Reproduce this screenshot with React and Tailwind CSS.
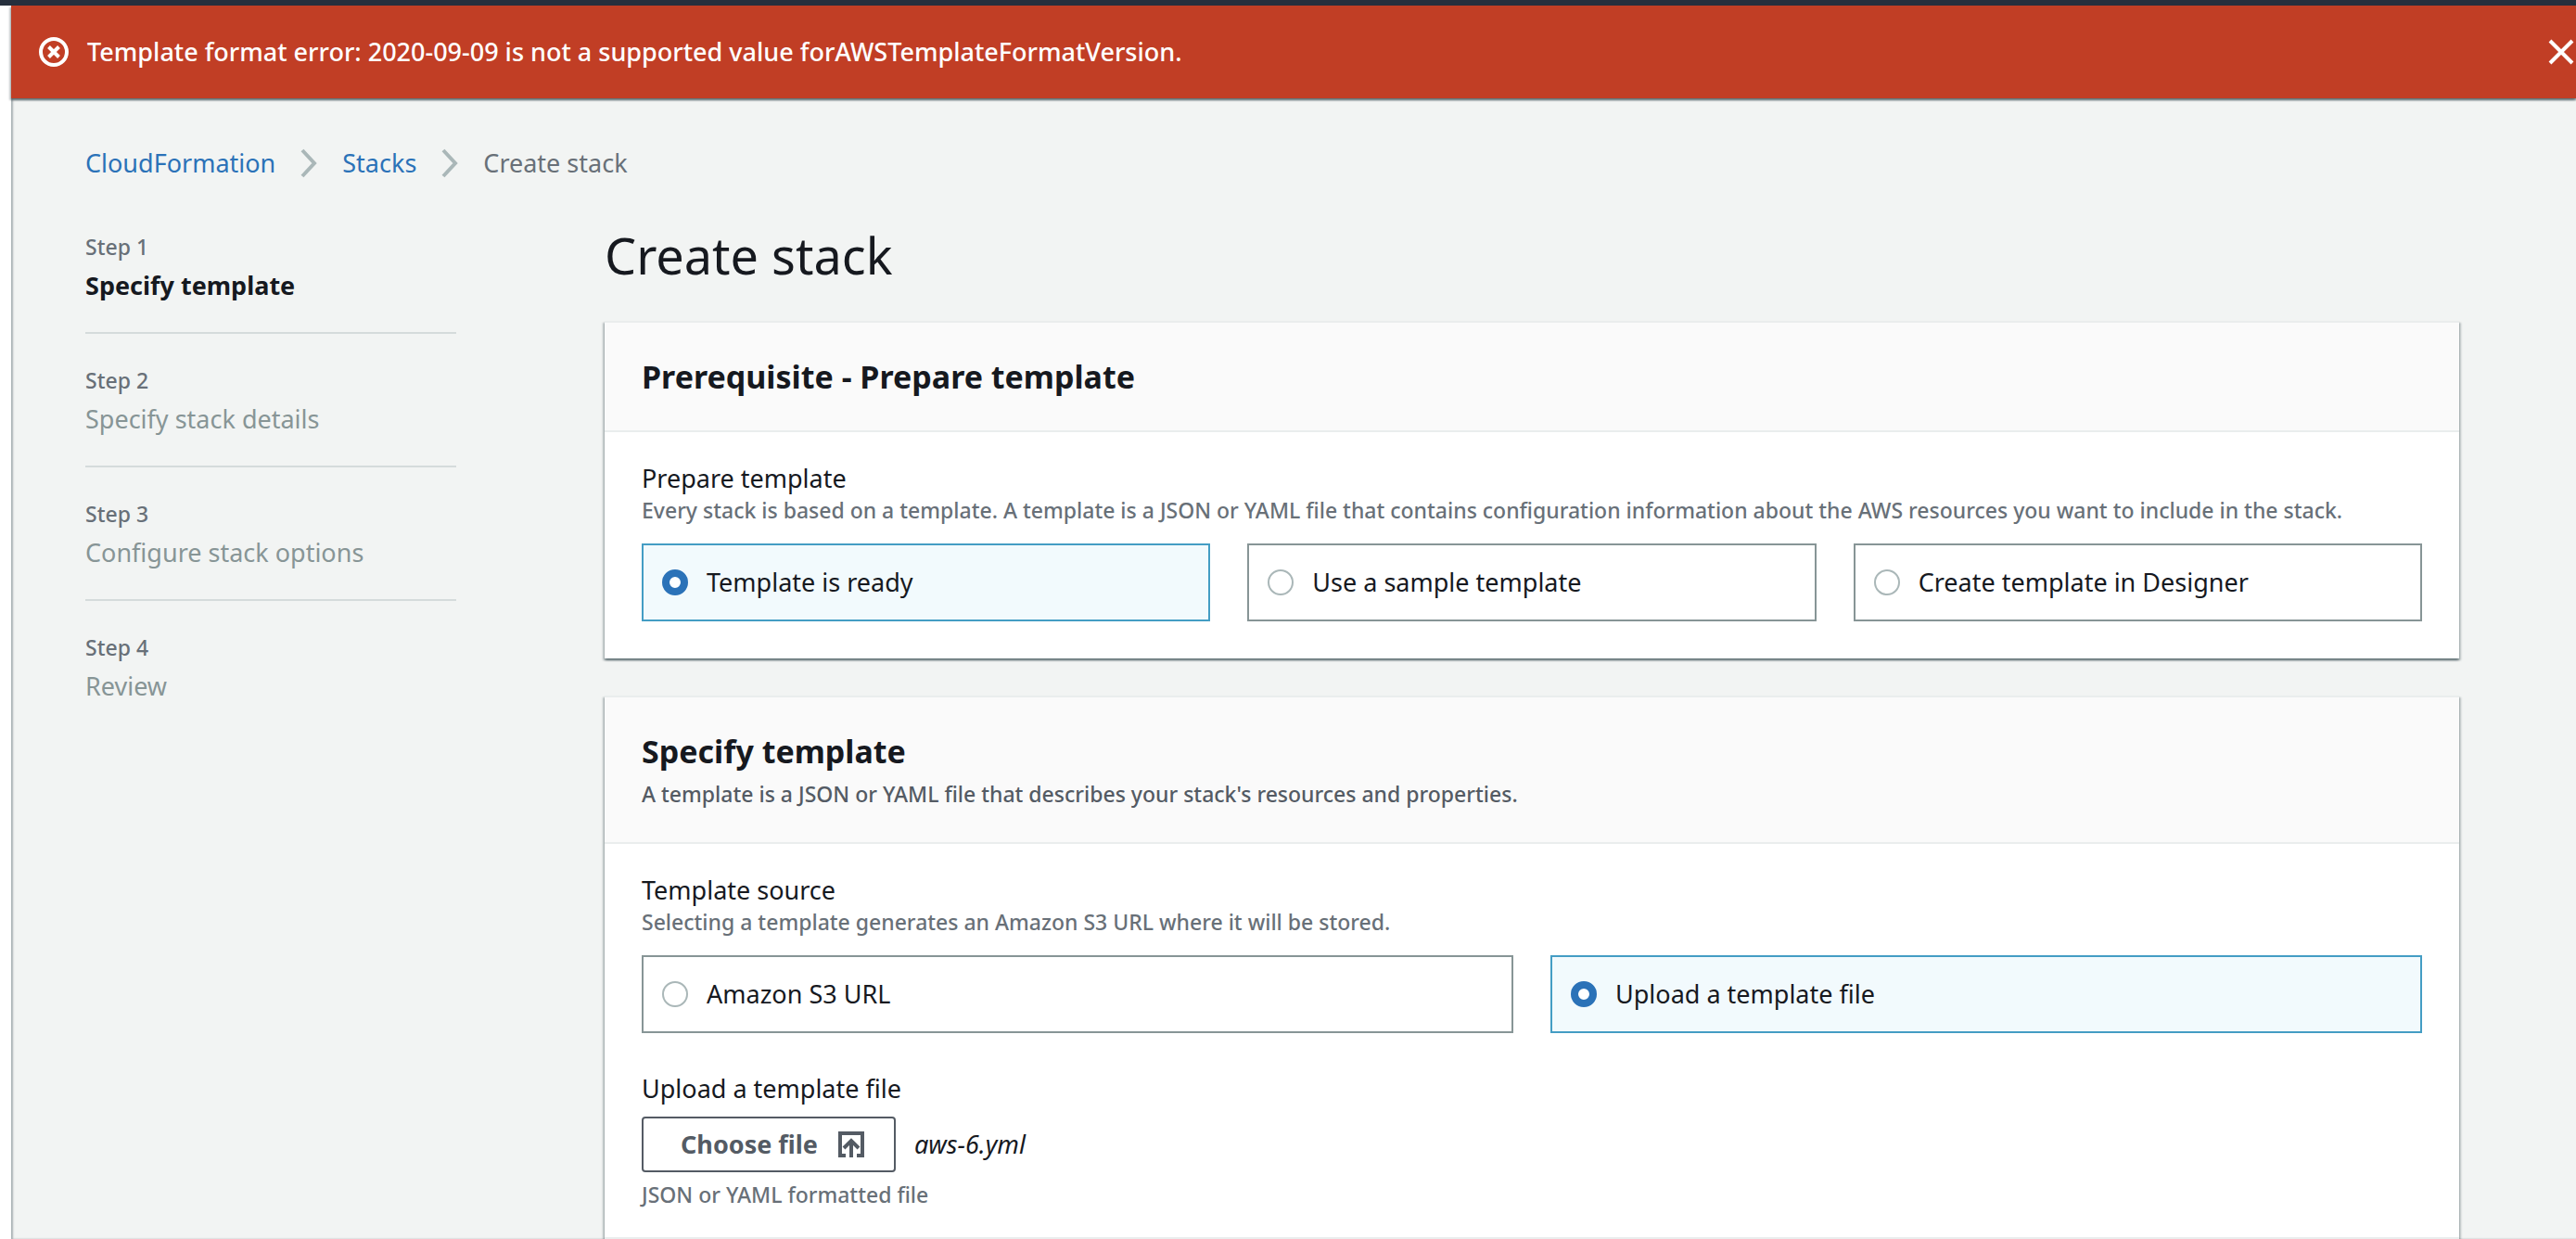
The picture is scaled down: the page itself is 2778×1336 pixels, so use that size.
import React, { useRef, useState } from "react";

const panelShadow =
  "shadow-[0_2px_2px_0_rgba(0,28,36,0.4),2px_2px_2px_0_rgba(0,28,36,0.2),-2px_2px_2px_0_rgba(0,28,36,0.2)]";

const steps = ["Specify template", "Specify stack details", "Configure stack options", "Review"];

function ErrorIcon() {
  return (
    <svg viewBox="0 0 32 32" className="size-8 shrink-0" fill="none" stroke="currentColor" strokeWidth="4" aria-hidden="true">
      <circle cx="16" cy="16" r="14" />
      <path d="M10.5 10.5l11 11M21.5 10.5l-11 11" />
    </svg>
  );
}

function CloseIcon() {
  return (
    <svg viewBox="0 0 28 28" className="size-7" fill="none" stroke="currentColor" strokeWidth="4" aria-hidden="true">
      <path d="M2 2l24 24M26 2L2 26" />
    </svg>
  );
}

function Chevron() {
  return (
    <svg viewBox="0 0 18 32" className="h-8 w-[18px]" fill="none" stroke="#aab7b8" strokeWidth="4" aria-hidden="true">
      <path d="M2 2l13 14L2 30" />
    </svg>
  );
}

function UploadIcon() {
  return (
    <svg viewBox="0 0 28 28" className="size-7" fill="none" stroke="currentColor" strokeWidth="4" aria-hidden="true">
      <path d="M8 26H2V2h24v24h-6" />
      <path d="M14 28V11M6 18l8-8 8 8" />
    </svg>
  );
}

function Alert({ onDismiss }) {
  return (
    <div
      role="alert"
      className={`relative z-10 flex h-[100px] items-center gap-5 bg-[#c13e25] pr-0.5 pl-[30px] text-white ${panelShadow}`}
    >
      <ErrorIcon />
      <p className="flex-1 font-medium">
        Template format error: 2020-09-09 is not a supported value forAWSTemplateFormatVersion.
      </p>
      <button type="button" aria-label="Dismiss" onClick={onDismiss}>
        <CloseIcon />
      </button>
    </div>
  );
}

function Breadcrumbs() {
  return (
    <nav aria-label="Breadcrumb">
      <ol className="flex items-center gap-[27px] leading-11">
        <li><a href="#cloudformation" className="text-[#2b72b8]">CloudFormation</a></li>
        <li><Chevron /></li>
        <li><a href="#stacks" className="text-[#2b72b8]">Stacks</a></li>
        <li><Chevron /></li>
        <li className="text-[#687078]">Create stack</li>
      </ol>
    </nav>
  );
}

function Steps() {
  return (
    <ol className="w-[400px] shrink-0 pt-3">
      {steps.map((name, i) => (
        <li
          key={name}
          className={
            i === 0
              ? "border-b-2 border-[#d5dbdb] pb-7"
              : "border-b-2 border-[#d5dbdb] pt-9 pb-7 last:border-b-0"
          }
        >
          <p className="text-[23px] leading-7 font-medium text-[#687078]">Step {i + 1}</p>
          <p className={i === 0 ? "mt-1.5 leading-11 font-bold text-[#16191f]" : "mt-1.5 leading-11 text-[#879596]"}>
            {name}
          </p>
        </li>
      ))}
    </ol>
  );
}

function Panel({ title, description, children }) {
  return (
    <section className={`border-t-2 border-[#eaeded] bg-white ${panelShadow}`}>
      <header className="border-b-2 border-[#eaeded] bg-[#fafafa] px-10 py-9">
        <h2 className="text-[34px] leading-11 font-bold">{title}</h2>
        {description && <p className="mt-2 text-[23px] leading-8 font-medium text-[#545b64]">{description}</p>}
      </header>
      {children}
    </section>
  );
}

function Tiles({ name, label, hint, options, initial, columns }) {
  const [value, setValue] = useState(initial);
  return (
    <fieldset>
      <legend className="leading-9">{label}</legend>
      <p className="text-[23px] leading-8 font-medium text-[#687078]">{hint}</p>
      <div className={`mt-5 grid gap-10 ${columns}`}>
        {options.map((option) => (
          <label
            key={option}
            className="flex h-[84px] items-center gap-5 border-2 border-[#879596] px-5 has-checked:border-[#449dc4] has-checked:bg-[#f2fafd]"
          >
            <input
              type="radio"
              name={name}
              checked={value === option}
              onChange={() => setValue(option)}
              className="size-7 appearance-none rounded-full border-2 border-[#aab7b8] bg-white checked:border-8 checked:border-[#2b72b8]"
            />
            <span>{option}</span>
          </label>
        ))}
      </div>
    </fieldset>
  );
}

function FileField() {
  const input = useRef(null);
  const [fileName, setFileName] = useState("aws-6.yml");
  return (
    <div className="mt-[42px]">
      <label htmlFor="template-file" className="block leading-9">Upload a template file</label>
      <div className="mt-3 flex items-center gap-5">
        <button
          type="button"
          onClick={() => input.current.click()}
          className="flex h-15 items-center gap-[22px] rounded border-2 border-[#545b64] bg-white pr-8 pl-10 font-bold text-[#545b64]"
        >
          Choose file
          <UploadIcon />
        </button>
        <input
          ref={input}
          id="template-file"
          type="file"
          className="hidden"
          onChange={(e) => e.target.files[0] && setFileName(e.target.files[0].name)}
        />
        <span className="italic">{fileName}</span>
      </div>
      <p className="mt-2 text-[23px] leading-8 font-medium text-[#687078]">JSON or YAML formatted file</p>
    </div>
  );
}

export default function App() {
  const [alertOpen, setAlertOpen] = useState(true);
  return (
    <div className="min-h-screen bg-white font-['Noto_Sans',sans-serif] text-[27px] leading-11 text-[#16191f]">
      <div className="h-1.5 bg-[#262f3d]" />
      <div className="ml-3 bg-[#f2f4f3] shadow-[inset_2px_0_2px_0_rgba(0,28,36,0.3)]">
        {alertOpen && <Alert onDismiss={() => setAlertOpen(false)} />}
        <div className="pt-12 pr-[126px] pl-20">
          <Breadcrumbs />
          <div className="mt-[42px] flex gap-40">
            <Steps />
            <main className="min-w-0 flex-1">
              <h1 className="text-[54px] leading-[70px]">Create stack</h1>
              <div className="mt-9 flex flex-col gap-10">
                <Panel title="Prerequisite - Prepare template">
                  <div className="px-10 pt-8 pb-10">
                    <Tiles
                      name="prepare"
                      label="Prepare template"
                      hint="Every stack is based on a template. A template is a JSON or YAML file that contains configuration information about the AWS resources you want to include in the stack."
                      options={["Template is ready", "Use a sample template", "Create template in Designer"]}
                      initial="Template is ready"
                      columns="grid-cols-3"
                    />
                  </div>
                </Panel>
                <Panel
                  title="Specify template"
                  description="A template is a JSON or YAML file that describes your stack's resources and properties."
                >
                  <div className="border-b-2 border-[#eaeded] px-10 pt-8 pb-[30px]">
                    <Tiles
                      name="source"
                      label="Template source"
                      hint="Selecting a template generates an Amazon S3 URL where it will be stored."
                      options={["Amazon S3 URL", "Upload a template file"]}
                      initial="Upload a template file"
                      columns="grid-cols-2"
                    />
                    <FileField />
                  </div>
                </Panel>
              </div>
            </main>
          </div>
        </div>
      </div>
    </div>
  );
}
